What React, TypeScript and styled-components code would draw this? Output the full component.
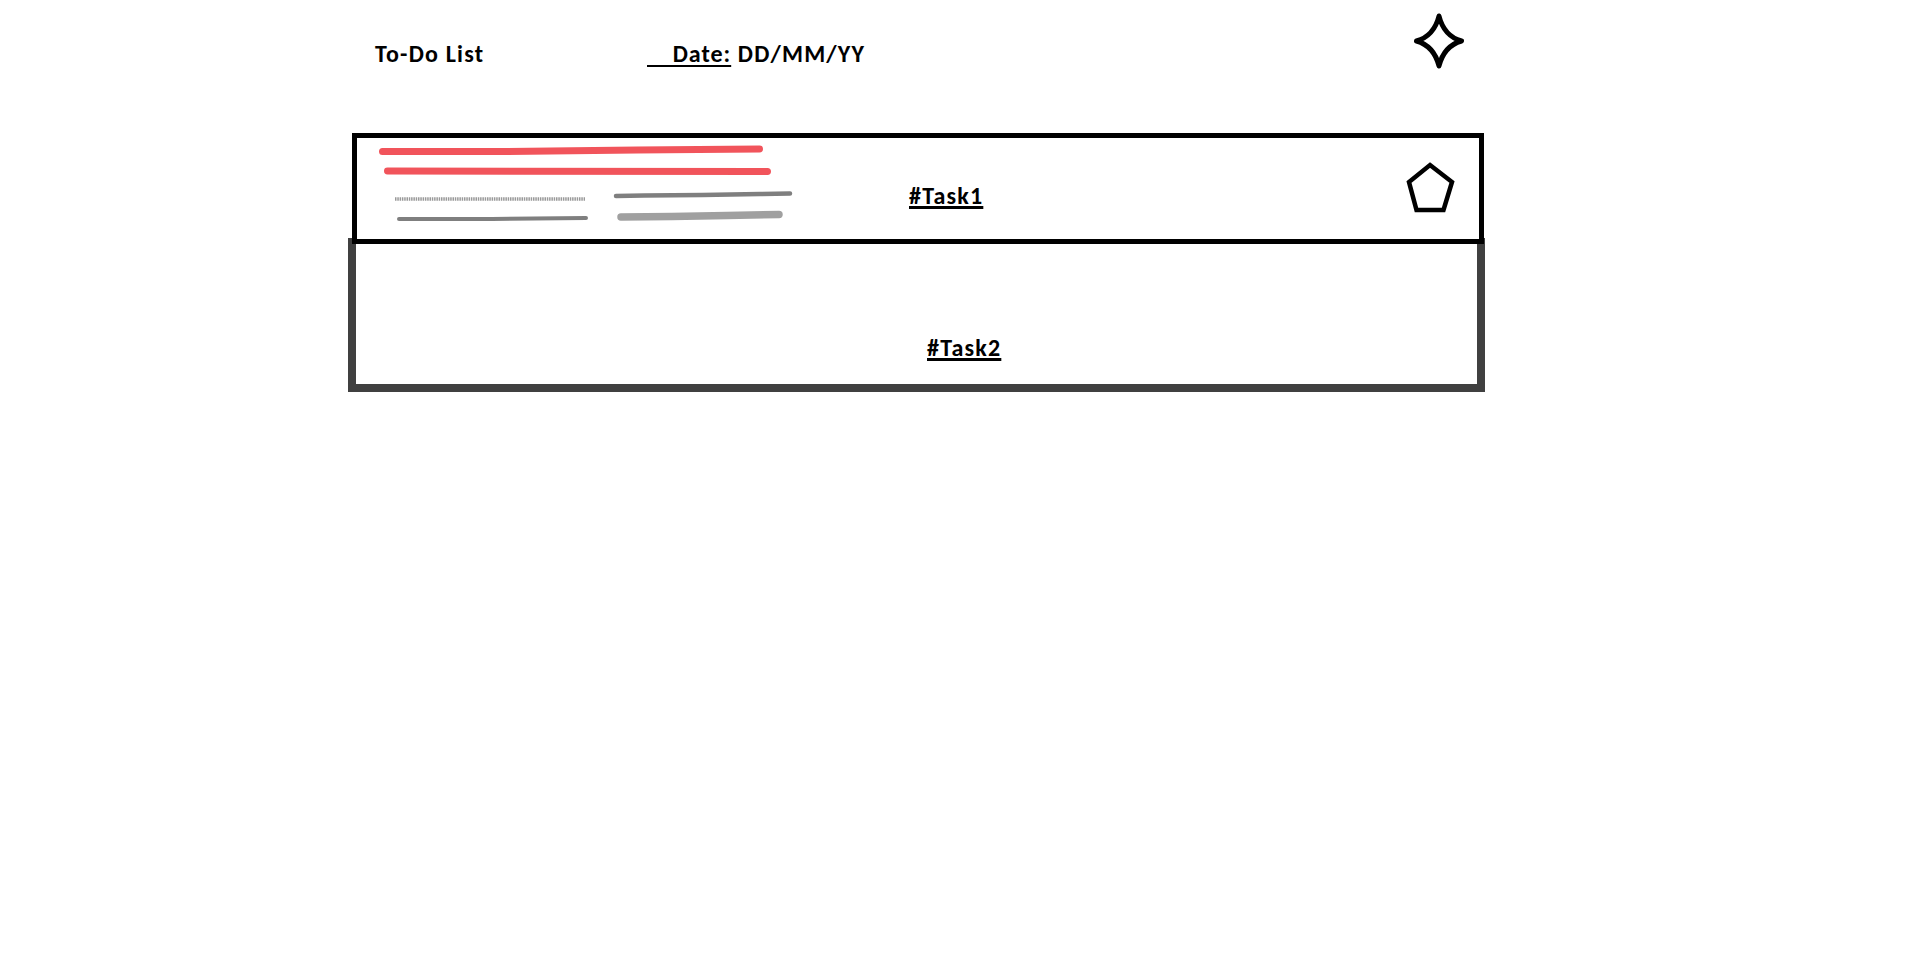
import React from "react";
import styled, { createGlobalStyle } from "styled-components";

const GlobalStyle = createGlobalStyle`
  html, body {
    margin: 0;
    padding: 0;
    background: #ffffff;
  }
  body {
    font-family: Carlito, Lato, "Open Sans", sans-serif;
    color: #000;
  }
`;

const Page = styled.div`
  width: 1137px;
  margin-left: 348px;
  display: flex;
  flex-direction: column;
`;

const Header = styled.header`
  display: grid;
  grid-template-columns: 299px auto 1fr auto;
  align-items: start;
  padding-top: 12px;
`;

const Heading = styled.h1`
  margin: 28px 0 0 27px;
  font-size: 24px;
  line-height: 28px;
  letter-spacing: 1.2px;
  font-weight: 700;
`;

const DateLine = styled.div`
  margin-top: 28px;
  font-size: 24px;
  line-height: 28px;
  letter-spacing: 1.2px;
  font-weight: 700;
  white-space: pre;
`;

const DateLabel = styled.span`
  text-decoration: underline;
  text-decoration-thickness: 2px;
  text-underline-offset: 3px;
  letter-spacing: 1px;
`;

const StarIcon = styled.svg`
  grid-column: 4;
  width: 52px;
  height: 58px;
  margin-right: 20px;
  display: block;
`;

const TaskList = styled.main`
  display: flex;
  flex-direction: column;
  margin-top: 63px;
`;

const TaskCard = styled.section<{ $expanded?: boolean }>`
  box-sizing: border-box;
  display: flex;
  align-items: flex-start;
  background: #fff;
  ${(p) =>
    p.$expanded
      ? `
    position: relative;
    z-index: 1;
    height: 111px;
    margin: 0 1px 0 4px;
    border: 5px solid #000;
  `
      : `
    height: 154px;
    margin-top: -6px;
    border: 8px solid #404040;
    border-top-width: 6px;
  `}
`;

const TaskTitle = styled.h2<{ $offsetX: number; $offsetY: number }>`
  margin: ${(p) => p.$offsetY}px 0 0 ${(p) => p.$offsetX}px;
  font-size: 24px;
  line-height: 28px;
  letter-spacing: 1.2px;
  font-weight: 700;
  text-decoration: underline;
  text-decoration-thickness: 2.5px;
  text-underline-offset: 2px;
  white-space: nowrap;
`;

const Scribble = styled.svg`
  display: block;
  flex: none;
  width: 430px;
  height: 90px;
  margin: 1px 0 0 15px;
`;

const Spacer = styled.div`
  flex: 1;
`;

const PentagonIcon = styled.svg`
  display: block;
  flex: none;
  width: 50px;
  height: 52px;
  margin: 24px 24px 0 0;
`;

export default function App() {
  return (
    <>
      <GlobalStyle />
      <Page>
        <Header>
          <Heading>To-Do List</Heading>
          <DateLine>
            <DateLabel>{"    Date:"}</DateLabel>
            {" DD/MM/YY"}
          </DateLine>
          <StarIcon viewBox="-26 -29 52 58" aria-hidden="true">
            <path
              d="M0,-25 Q5,-5 22.5,0 Q5,5 0,25 Q-5,5 -22.5,0 Q-5,-5 0,-25 Z"
              fill="none"
              stroke="#000"
              strokeWidth="5"
              strokeLinejoin="round"
            />
          </StarIcon>
        </Header>
        <TaskList>
          <TaskCard $expanded>
            <Scribble viewBox="0 0 430 90" aria-hidden="true">
              <g fill="none" strokeLinecap="round">
                <path d="M10.5,12.5 L135,12.5 L265,11 L387.5,10" stroke="#f1545b" strokeWidth="7" />
                <path d="M15.5,32 L395.5,32.5" stroke="#f1545b" strokeWidth="7" />
                <path
                  d="M23,60 L213,60"
                  stroke="#999999"
                  strokeWidth="3.5"
                  strokeDasharray="1.5 0.8"
                  strokeLinecap="butt"
                />
                <path d="M27,80 L120,80 L214,79" stroke="#7f7f7f" strokeWidth="4" />
                <path d="M244,57 L272,56.5 L330,56 L388,55 L418,54.5" stroke="#7f7f7f" strokeWidth="4.5" />
                <path d="M249,78 L300,77.5 L355,76.5 L407,75.5" stroke="#a0a0a0" strokeWidth="7.5" />
              </g>
            </Scribble>
            <TaskTitle $offsetX={107} $offsetY={44}>
              #Task1
            </TaskTitle>
            <Spacer />
            <PentagonIcon viewBox="0 0 50 52" aria-hidden="true">
              <polygon
                points="25,3 47,20 38.5,48 11.5,48 4,20"
                fill="none"
                stroke="#000"
                strokeWidth="4.5"
                strokeLinejoin="miter"
              />
            </PentagonIcon>
          </TaskCard>
          <TaskCard>
            <TaskTitle $offsetX={571} $offsetY={90}>
              #Task2
            </TaskTitle>
          </TaskCard>
        </TaskList>
      </Page>
    </>
  );
}
